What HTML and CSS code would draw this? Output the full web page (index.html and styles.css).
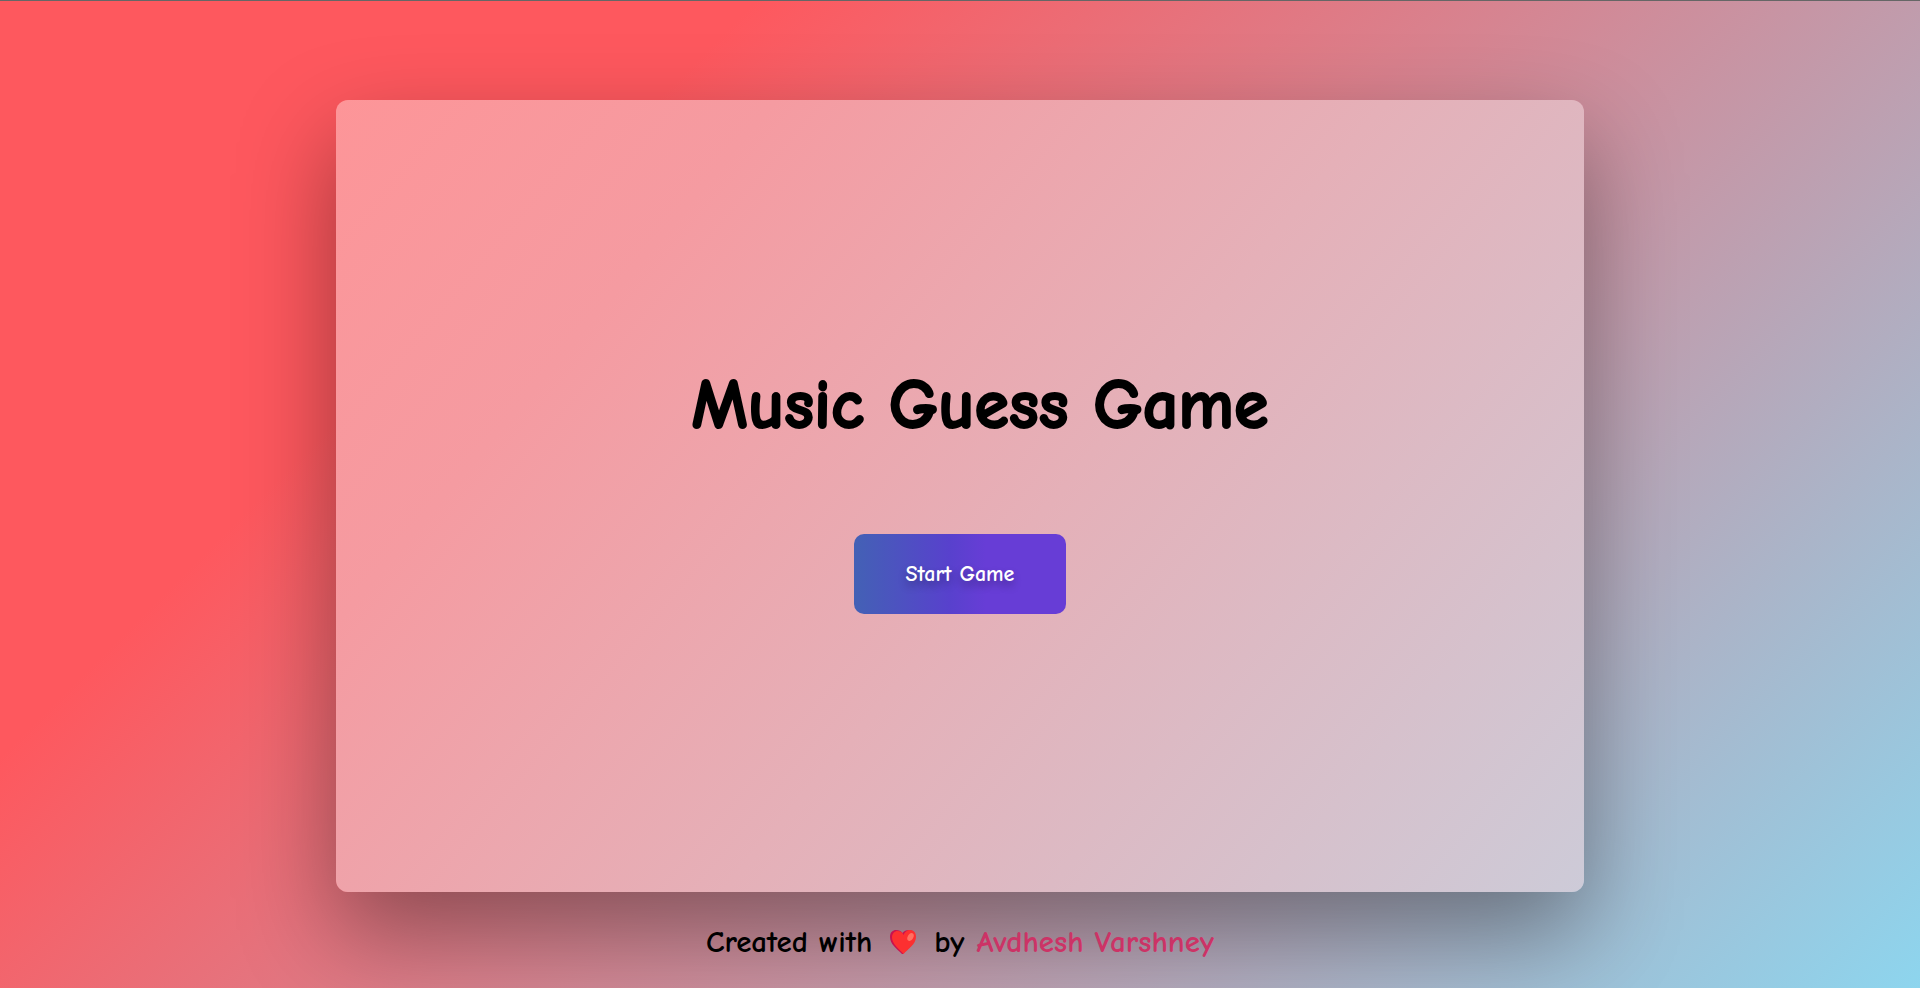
FILE: index.html
```html
<!DOCTYPE html>
<html lang="en">
<head>
<meta charset="utf-8">
<meta name="viewport" content="width=device-width, initial-scale=1">
<title>Music Guess Game</title>
<link rel="stylesheet" href="styles.css">
</head>
<body>
<main class="card">
  <h1 class="title">Music Guess Game</h1>
  <button class="start" type="button">Start Game</button>
</main>
<footer class="footer">
  <span>Created with</span>
  <svg class="heart" viewBox="0 0 28 26" role="img" aria-label="love">
    <path fill="#c9124f" d="M13 25C8 20 1 15 1 8C1 3 4 1 7 1C10 1 12 2 13.500 4C15 2 17 1 20 1C24 1 26 4 26 8C26 15 18 20 14 25Z"/>
    <path fill="#fc3030" d="M14.500 25C10 20 3 15 3 8.500C3 4.500 5.500 2 8.500 2C11.500 2 13.500 3.500 14.500 6C15.500 3 18 1 21 1C25 1 27 4 27 8C27 15 19 20 14.500 25Z"/>
    <ellipse cx="21.500" cy="8" rx="2.800" ry="4.200" transform="rotate(28 21.500 8)" fill="#ff7161"/>
  </svg>
  <span>by</span>
  <a class="author" href="#">Avdhesh Varshney</a>
</footer>
</body>
</html>
```
FILE: styles.css
```css
* {
  box-sizing: border-box;
}

body {
  margin: 0;
  min-height: 100vh;
  display: flex;
  flex-direction: column;
  align-items: center;
  border-top: 1px solid #666;
  background: linear-gradient(135deg, #fe585e 26%, #8dd5ee 100%);
  font-family: "Comic Sans MS", "Comic Neue", Lato, sans-serif;
  color: #000;
}

.card {
  width: 65%;
  min-height: calc(80vh + 2px);
  margin-top: 99px;
  padding: 16px 16px 38px;
  display: flex;
  flex-direction: column;
  align-items: center;
  justify-content: center;
  gap: 78px;
  border-radius: 12px;
  background: linear-gradient(130deg, #fd9598, #f59ba1 23%, #e5b0b8 55%, #cdcbd8);
  box-shadow: 0 40px 96px rgba(0, 0, 0, 0.38);
}

.title {
  margin: 0;
  padding-left: 40px;
  font-size: 70px;
  line-height: 100px;
  font-weight: 700;
  text-align: center;
  -webkit-text-stroke: 2px #000;
}

.start {
  padding: 24px 52px;
  border: 0;
  border-radius: 10px;
  background: linear-gradient(90deg, #4361b5, #5841cd 45%, #673dd6 62%);
  color: #fff;
  font-family: inherit;
  font-size: 22px;
  line-height: 32px;
  font-weight: 700;
  text-shadow: 0 5px 8px rgba(0, 0, 0, 0.3);
  cursor: pointer;
}

.footer {
  padding: 32px 0 16px;
  display: flex;
  align-items: center;
  gap: 12px;
  font-size: 31px;
  line-height: 36px;
  font-weight: 700;
}

.heart {
  width: 28px;
  height: 26px;
  margin: 0 5px;
}

.author {
  color: #cc3366;
  text-decoration: none;
}
```
